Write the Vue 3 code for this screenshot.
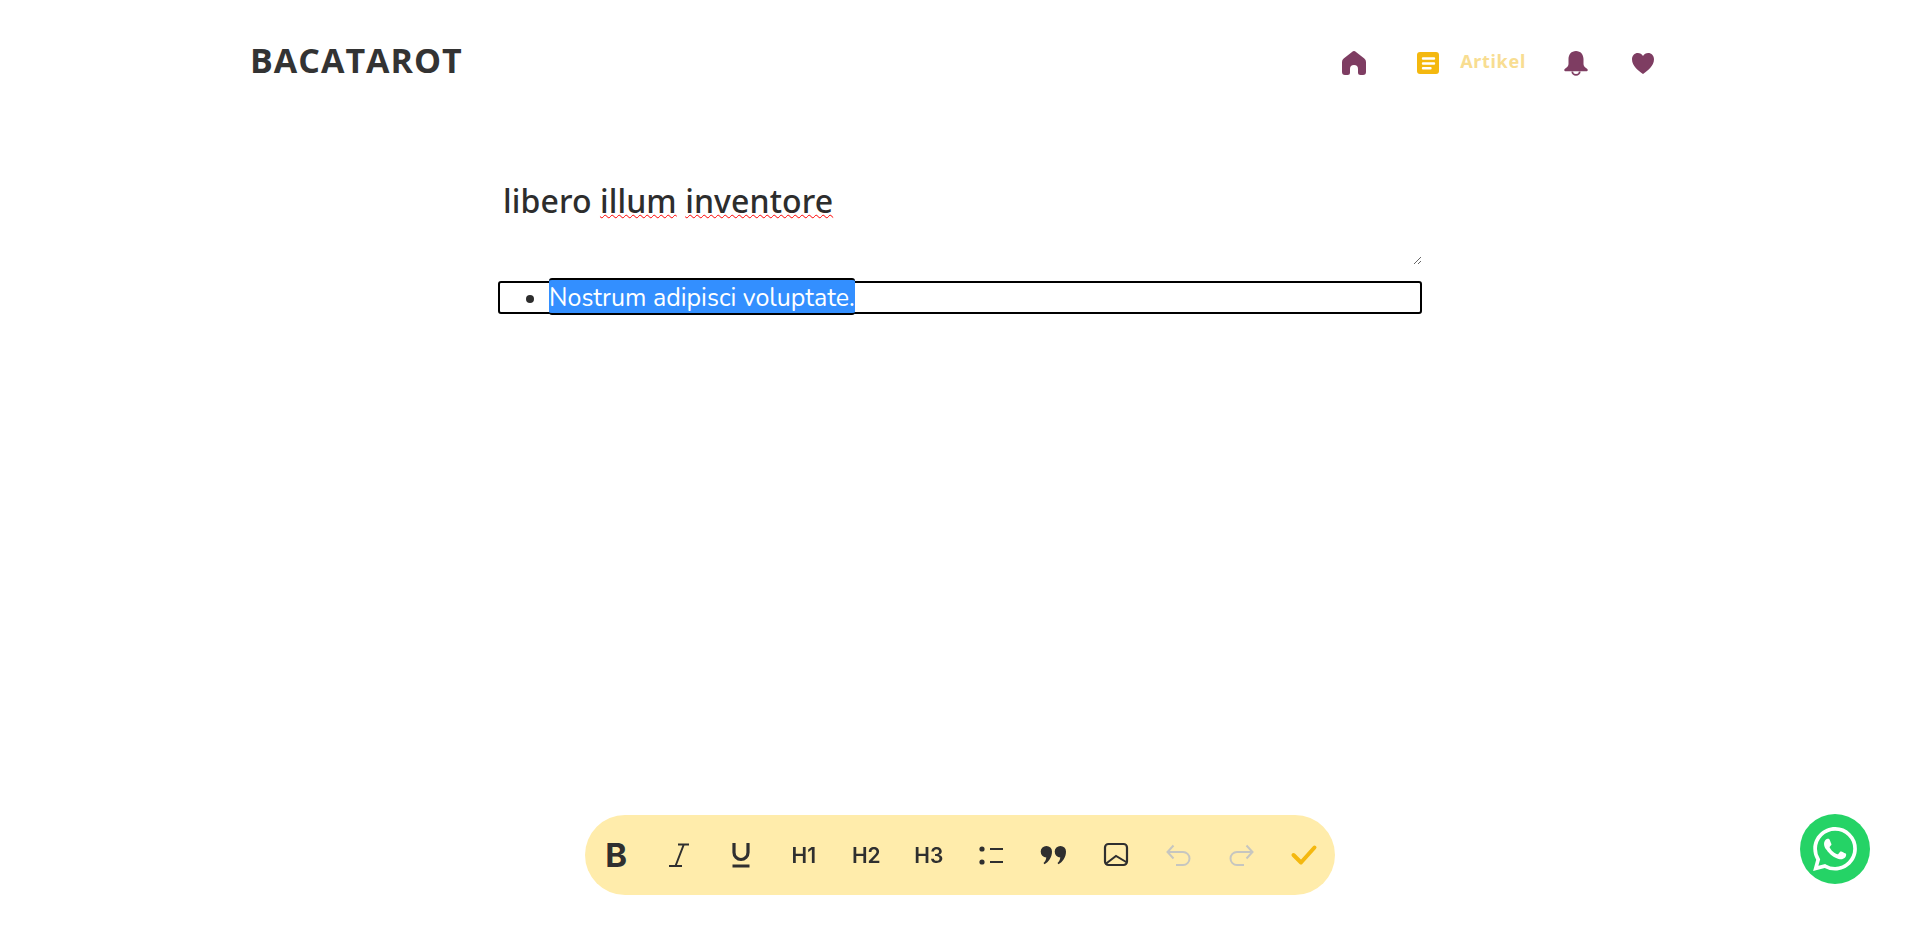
<script setup>
const headings = ['H1', 'H2', 'H3']
</script>

<template>
  <div class="page">
    <header class="header">
      <div class="logo">BACATAROT</div>
      <nav class="nav">
        <a class="nav-item home" aria-label="Home">
          <svg width="24" height="24" viewBox="0 0 24 24"><path fill="#7e3d62" d="M10 .9a3.2 3.2 0 0 1 4 0l8.3 6.6A4.400 4.400 0 0 1 24 11v10a3 3 0 0 1-3 3h-2.500a2.500 2.500 0 0 1-2.500-2.500V18a4 4 0 0 0-8 0v3.500A2.500 2.500 0 0 1 5.500 24H3a3 3 0 0 1-3-3V11a4.400 4.400 0 0 1 1.700-3.500z"/></svg>
        </a>
        <a class="nav-item article" aria-label="Artikel">
          <svg width="22" height="22" viewBox="0 0 22 22"><rect width="22" height="22" rx="3" fill="#f4b80f"/><path d="M6 6.500h11M6 11.500h11M6 16.300h7.500" stroke="#fff" stroke-width="2.400" stroke-linecap="round"/></svg>
          <span>Artikel</span>
        </a>
        <a class="nav-item bell" aria-label="Notifikasi">
          <svg width="24" height="25" viewBox="0 0 24 25"><path fill="#7e3d62" d="M12 0c4.700 0 7.500 3.600 7.500 8v5c0 2 1.200 3.200 3.200 4.400 1.700 1 1.300 2.900-.7 2.900H2c-2 0-2.400-1.900-.7-2.900C3.300 16.200 4.500 15 4.500 13V8c0-4.400 2.800-8 7.500-8z"/><path fill="none" stroke="#7e3d62" stroke-width="1.800" d="M8.300 20.500a3.700 3.400 0 0 0 7.400 0"/></svg>
        </a>
        <a class="nav-item heart" aria-label="Favorit">
          <svg width="22" height="21" viewBox="0 0 22 21"><path fill="#7e3d62" d="M11 21C6.500 17.800 0 13 0 6.300 0 2.700 2.600 0 5.800 0 8 0 9.900 1.100 11 3c1.100-1.900 3-3 5.200-3C19.400 0 22 2.700 22 6.300 22 13 15.500 17.800 11 21z"/></svg>
        </a>
      </nav>
    </header>

    <main class="editor">
      <div class="title">libero <span class="typo">illum</span> <span class="typo">inventore</span></div>
      <ul class="body">
        <li><span class="selected">Nostrum adipisci voluptate.</span></li>
      </ul>
    </main>

    <div class="toolbar">
      <button class="tool bold">B</button>
      <button class="tool" aria-label="Italic">
        <svg viewBox="0 0 28 28"><path d="M13 3.500h11M4 25h13M18.800 3.500 10.500 25" fill="none" stroke="#2f2f2f" stroke-width="2"/></svg>
      </button>
      <button class="tool" aria-label="Underline">
        <svg viewBox="0 0 28 28"><path d="M7 2v9.500a7 7 0 0 0 14 0V2" fill="none" stroke="#2f2f2f" stroke-width="3.200"/><path d="M5.500 25h17" fill="none" stroke="#2f2f2f" stroke-width="3"/></svg>
      </button>
      <button v-for="h in headings" :key="h" class="tool heading">{{ h }}</button>
      <button class="tool" aria-label="List">
        <svg viewBox="0 0 28 28"><circle cx="5" cy="8" r="2.600" fill="#2f2f2f"/><circle cx="5" cy="21" r="2.600" fill="#2f2f2f"/><path d="M13 8h13M13 21h13" stroke="#2f2f2f" stroke-width="1.800"/></svg>
      </button>
      <button class="tool" aria-label="Quote">
        <svg viewBox="0 0 28 28"><path fill="#2f2f2f" d="M6.500 5a5.500 5.500 0 0 1 5.500 5.500c0 6-3.500 10.500-7.500 12.700l-1-1.200c1.500-1.500 2.500-3 2.800-5.600A5.500 5.500 0 0 1 6.500 5z"/><path fill="#2f2f2f" transform="translate(14)" d="M6.500 5a5.500 5.500 0 0 1 5.500 5.500c0 6-3.500 10.500-7.500 12.700l-1-1.200c1.500-1.500 2.500-3 2.800-5.600A5.500 5.500 0 0 1 6.500 5z"/></svg>
      </button>
      <button class="tool" aria-label="Image">
        <svg viewBox="0 0 28 28"><rect x="3" y="3" width="22" height="21" rx="3.500" fill="none" stroke="#2f2f2f" stroke-width="2.200"/><path d="M3.500 23 14 15l11 6.500" fill="none" stroke="#2f2f2f" stroke-width="2"/></svg>
      </button>
      <button class="tool" aria-label="Undo">
        <svg viewBox="0 0 28 28"><path d="M8.500 4.500 2.500 11l6 6.500M2.500 11H18a6.500 6.500 0 0 1 0 13h-7" fill="none" stroke="#c6c6c0" stroke-width="2"/></svg>
      </button>
      <button class="tool" aria-label="Redo">
        <svg viewBox="0 0 28 28"><path d="M19.500 4.500 25.500 11l-6 6.500M25.500 11H10a6.500 6.500 0 0 0 0 13h7" fill="none" stroke="#c6c6c0" stroke-width="2"/></svg>
      </button>
      <button class="tool" aria-label="Simpan">
        <svg viewBox="0 0 28 28"><path d="M3.500 14 11 21.500 24.500 6.500" fill="none" stroke="#f4b80f" stroke-width="4" stroke-linecap="round" stroke-linejoin="round"/></svg>
      </button>
    </div>

    <a class="whatsapp" aria-label="WhatsApp">
      <svg width="44" height="44" viewBox="0 0 24 24"><path fill="#fff" d="M17.472 14.382c-.297-.149-1.758-.867-2.030-.967-.273-.099-.471-.148-.670.150-.197.297-.767.966-.940 1.164-.173.199-.347.223-.644.075-.297-.150-1.255-.463-2.390-1.475-.883-.788-1.480-1.761-1.653-2.059-.173-.297-.018-.458.130-.606.134-.133.298-.347.446-.520.149-.174.198-.298.298-.497.099-.198.050-.371-.025-.520-.075-.149-.669-1.612-.916-2.207-.242-.579-.487-.500-.669-.510-.173-.008-.371-.010-.570-.010-.198 0-.520.074-.792.372-.272.297-1.040 1.016-1.040 2.479 0 1.462 1.065 2.875 1.213 3.074.149.198 2.096 3.200 5.077 4.487.709.306 1.262.489 1.694.625.712.227 1.360.195 1.871.118.571-.085 1.758-.719 2.006-1.413.248-.694.248-1.289.173-1.413-.074-.124-.272-.198-.570-.347m-5.421 7.403h-.004a9.870 9.870 0 0 1-5.031-1.378l-.361-.214-3.741.982.998-3.648-.235-.374a9.860 9.860 0 0 1-1.510-5.260c.001-5.450 4.436-9.884 9.888-9.884 2.640 0 5.122 1.030 6.988 2.898a9.825 9.825 0 0 1 2.893 6.994c-.003 5.450-4.437 9.884-9.885 9.884m8.413-18.297A11.815 11.815 0 0 0 12.050 0C5.495 0 .160 5.335.157 11.892c0 2.096.547 4.142 1.588 5.945L.057 24l6.305-1.654a11.882 11.882 0 0 0 5.683 1.448h.005c6.554 0 11.890-5.335 11.893-11.893a11.821 11.821 0 0 0-3.480-8.413z"/></svg>
    </a>
  </div>
</template>

<style>
html, body { margin: 0; background: #fff; }
</style>

<style scoped>
.page {
  min-height: 934px;
  overflow: hidden;
  color: #2d2d2d;
  font-family: "Open Sans", "Liberation Sans", sans-serif;
}
.header {
  display: flex;
  justify-content: space-between;
  align-items: center;
  width: 1418px;
  height: 124px;
  margin: 0 auto;
}
.logo {
  font-size: 34px;
  font-weight: 700;
  letter-spacing: 1px;
  line-height: 44px;
  margin-top: -4px;
  margin-left: -1px;
  color: #333;
}
.nav {
  display: flex;
  align-items: center;
  padding-right: 15px;
  margin-top: 2px;
}
.nav-item { display: flex; align-items: center; }
.nav-item svg { display: block; }
.article { margin-left: 51px; gap: 21px; }
.article span {
  font-family: "Noto Sans", sans-serif;
  font-size: 18px;
  font-weight: 700;
  letter-spacing: .7px;
  color: #f8dd91;
  margin-top: -4px;
}
.bell { margin-left: 38px; }
.heart { margin-left: 44px; }
.editor {
  width: 924px;
  margin: 0 auto;
}
.title {
  box-sizing: border-box;
  height: 141px;
  margin-bottom: 16px;
  padding: 55px 5px 0;
  font-family: "Noto Sans", sans-serif;
  font-size: 32px;
  font-weight: 500;
  letter-spacing: .1px;
  line-height: 44px;
  resize: vertical;
  overflow: auto;
}
.typo {
  text-decoration: underline wavy #f00 1px;
  text-underline-offset: 1px;
  text-decoration-skip-ink: none;
}
.body {
  box-sizing: border-box;
  height: 33px;
  margin: 0;
  padding: 0 0 0 49px;
  border: 2px solid #000;
  border-radius: 3px;
  font-family: "Nunito", "Lato", sans-serif;
  font-size: 25px;
  line-height: 33px;
}
.selected {
  display: inline-block;
  height: 33px;
  line-height: 37px;
  margin-top: -5px;
  vertical-align: top;
  background: #338fff;
  color: #fff;
  border-top: 2px solid #000;
  border-bottom: 2px solid #000;
  border-radius: 3px;
}
.toolbar {
  position: fixed;
  left: 585px;
  bottom: 39px;
  width: 750px;
  height: 80px;
  display: grid;
  grid-template-columns: repeat(12, 1fr);
  align-items: center;
  background: #ffecab;
  border-radius: 40px;
}
.tool {
  display: flex;
  align-items: center;
  justify-content: center;
  height: 80px;
  padding: 0;
  border: 0;
  background: none;
  color: #2f2f2f;
  font-family: Inter, sans-serif;
}
.tool svg { width: 28px; height: 28px; display: block; }
.bold { font-size: 33px; font-weight: 700; }
.heading { font-size: 21px; font-weight: 600; }
.whatsapp {
  position: fixed;
  left: 1800px;
  top: 814px;
  width: 70px;
  height: 70px;
  display: flex;
  align-items: center;
  justify-content: center;
  border-radius: 50%;
  background: #25d366;
}
</style>
